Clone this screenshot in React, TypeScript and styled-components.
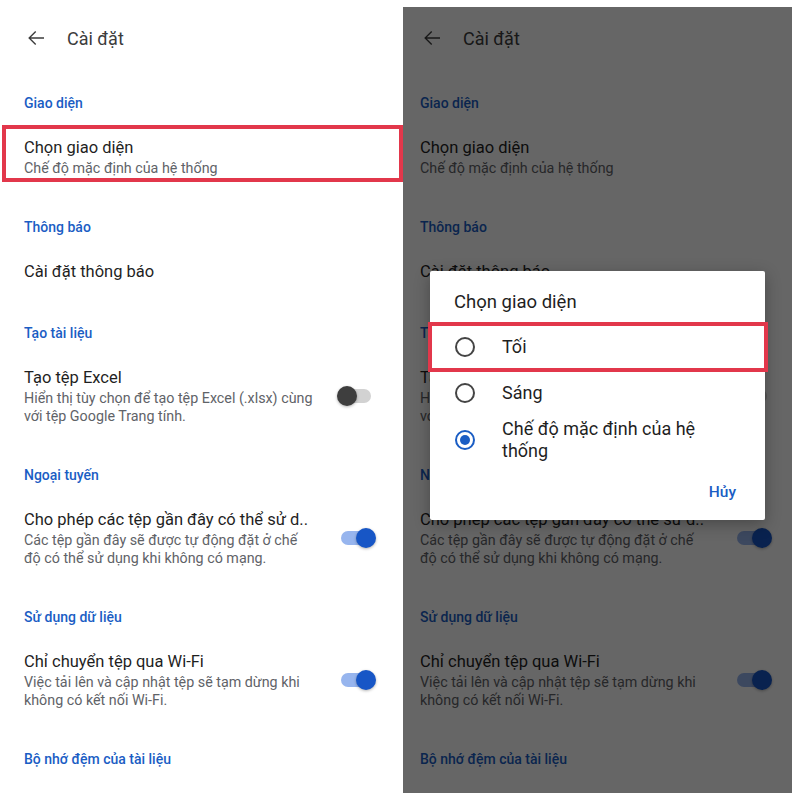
import React from 'react';
import styled, { createGlobalStyle, css } from 'styled-components';

interface SettingItem {
  title: string;
  lines?: string[];
  toggle?: 'on' | 'off';
  highlight?: boolean;
}

interface SettingSection {
  heading: string;
  items: SettingItem[];
}

const sections: SettingSection[] = [
  {
    heading: 'Giao diện',
    items: [{ title: 'Chọn giao diện', lines: ['Chế độ mặc định của hệ thống'], highlight: true }],
  },
  { heading: 'Thông báo', items: [{ title: 'Cài đặt thông báo' }] },
  {
    heading: 'Tạo tài liệu',
    items: [
      {
        title: 'Tạo tệp Excel',
        lines: ['Hiển thị tùy chọn để tạo tệp Excel (.xlsx) cùng', 'với tệp Google Trang tính.'],
        toggle: 'off',
      },
    ],
  },
  {
    heading: 'Ngoại tuyến',
    items: [
      {
        title: 'Cho phép các tệp gần đây có thể sử d..',
        lines: ['Các tệp gần đây sẽ được tự động đặt ở chế', 'độ có thể sử dụng khi không có mạng.'],
        toggle: 'on',
      },
    ],
  },
  {
    heading: 'Sử dụng dữ liệu',
    items: [
      {
        title: 'Chỉ chuyển tệp qua Wi-Fi',
        lines: ['Việc tải lên và cập nhật tệp sẽ tạm dừng khi', 'không có kết nối Wi-Fi.'],
        toggle: 'on',
      },
    ],
  },
  { heading: 'Bộ nhớ đệm của tài liệu', items: [] },
];

const themeOptions = [
  { label: ['Tối'], selected: false, highlight: true },
  { label: ['Sáng'], selected: false },
  { label: ['Chế độ mặc định của hệ', 'thống'], selected: true },
];

const RED = '#e2374b';
const BLUE = '#1a5dc4';

const GlobalStyle = createGlobalStyle`
  html, body {
    margin: 0;
    padding: 0;
    background: #fff;
  }
  body {
    font-family: Roboto, "Noto Sans", "Liberation Sans", sans-serif;
    -webkit-font-smoothing: antialiased;
  }
`;

const Page = styled.div`
  width: 800px;
  height: 800px;
  box-sizing: border-box;
  padding: 7px;
  display: flex;
  gap: 7px;
  background: #fff;
`;

const Phone = styled.div`
  position: relative;
  width: 389px;
  height: 786px;
  background: #fff;
`;

const Header = styled.div`
  height: 58px;
  padding-top: 4px;
  box-sizing: border-box;
  display: flex;
  align-items: center;
  padding-left: 17px;
  gap: 19px;
`;

const HeaderTitle = styled.div`
  font-size: 18px;
  color: #3c3c3c;
`;

const SectionHeading = styled.div`
  margin: 28px 0 12px;
  padding: 0 17px;
  font-size: 14px;
  font-weight: 500;
  line-height: 20px;
  color: ${BLUE};
`;

const Item = styled.div`
  position: relative;
  display: flex;
  align-items: center;
  padding: 12px 20px 12px 17px;
`;

const Highlight = styled.div`
  position: absolute;
  top: 0;
  left: -5px;
  right: -7px;
  height: 57px;
  box-sizing: border-box;
  border: 4px solid ${RED};
  pointer-events: none;
`;

const ItemText = styled.div`
  flex: 1;
  min-width: 0;
`;

const ItemTitle = styled.div`
  font-size: 16.5px;
  line-height: 22px;
  color: #1f1f1f;
  white-space: nowrap;
`;

const ItemLine = styled.div`
  font-size: 14.3px;
  line-height: 18px;
  color: #5f6368;
  white-space: nowrap;
`;

const Toggle = styled.div<{ $on: boolean }>`
  position: relative;
  width: 40px;
  height: 22px;
  flex: none;

  &::before {
    content: '';
    position: absolute;
    left: 5px;
    top: 4px;
    width: 30px;
    height: 14px;
    border-radius: 7px;
    background: ${(p) => (p.$on ? '#97b5ee' : '#d2d2d2')};
  }

  &::after {
    content: '';
    position: absolute;
    top: 1px;
    left: ${(p) => (p.$on ? '20px' : '1px')};
    width: 20px;
    height: 20px;
    border-radius: 50%;
    background: ${(p) => (p.$on ? '#1756c6' : '#3e3e3e')};
    box-shadow: 0 1px 3px rgba(0, 0, 0, 0.3);
  }
`;

const Scrim = styled.div`
  position: absolute;
  inset: 0;
  background: rgba(0, 0, 0, 0.6);
  display: flex;
  justify-content: center;
  align-items: center;
  padding-bottom: 9px;
  box-sizing: border-box;
`;

const Dialog = styled.div`
  width: 335px;
  box-sizing: border-box;
  background: #fff;
  border-radius: 2px;
  padding: 19px 0 18px;
  box-shadow: 0 4px 16px rgba(0, 0, 0, 0.3);
`;

const DialogTitle = styled.div`
  padding: 0 24px;
  font-size: 18.5px;
  line-height: 24px;
  color: #1f1f1f;
  margin-bottom: 10px;
`;

const OptionRow = styled.div<{ $tall?: boolean }>`
  position: relative;
  display: flex;
  align-items: center;
  gap: 27px;
  min-height: ${(p) => (p.$tall ? '48px' : '46px')};
  padding: 0 24px 0 25px;
  box-sizing: border-box;
`;

const OptionHighlight = styled.div`
  position: absolute;
  top: -2px;
  bottom: -2px;
  left: -2px;
  right: -3px;
  border: 4px solid ${RED};
  pointer-events: none;
`;

const Radio = styled.div<{ $checked: boolean }>`
  width: 20px;
  height: 20px;
  flex: none;
  box-sizing: border-box;
  border-radius: 50%;
  border: 2px solid ${(p) => (p.$checked ? BLUE : '#444')};
  display: flex;
  align-items: center;
  justify-content: center;

  ${(p) =>
    p.$checked &&
    css`
      &::after {
        content: '';
        width: 10px;
        height: 10px;
        border-radius: 50%;
        background: ${BLUE};
      }
    `}
`;

const OptionLabel = styled.div`
  font-size: 18px;
  line-height: 22px;
  color: #1f1f1f;
`;

const DialogActions = styled.div`
  display: flex;
  justify-content: flex-end;
  padding: 18px 29px 0 0;
`;

const CancelButton = styled.div`
  font-size: 15.5px;
  font-weight: 500;
  line-height: 20px;
  color: ${BLUE};
`;

const BackArrow = () => (
  <svg width="24" height="24" viewBox="0 0 24 24" fill="#3c3c3c">
    <path d="M20 11.25H6.9l5.3-5.3L11.2 5 4.2 12l7 7 1-0.95-5.3-5.3H20z" />
  </svg>
);

const SettingsScreen: React.FC<{ showHighlight?: boolean }> = ({ showHighlight }) => (
  <>
    <Header>
      <BackArrow />
      <HeaderTitle>Cài đặt</HeaderTitle>
    </Header>
    {sections.map((section) => (
      <div key={section.heading}>
        <SectionHeading>{section.heading}</SectionHeading>
        {section.items.map((item) => (
          <Item key={item.title}>
            {showHighlight && item.highlight && <Highlight />}
            <ItemText>
              <ItemTitle>{item.title}</ItemTitle>
              {item.lines?.map((line) => (
                <ItemLine key={line}>{line}</ItemLine>
              ))}
            </ItemText>
            {item.toggle && <Toggle $on={item.toggle === 'on'} />}
          </Item>
        ))}
      </div>
    ))}
  </>
);

const ThemeDialog = () => (
  <Dialog>
    <DialogTitle>Chọn giao diện</DialogTitle>
    {themeOptions.map((opt) => (
      <OptionRow key={opt.label.join(' ')} $tall={opt.label.length > 1}>
        {opt.highlight && <OptionHighlight />}
        <Radio $checked={opt.selected} />
        <OptionLabel>
          {opt.label.map((l) => (
            <div key={l}>{l}</div>
          ))}
        </OptionLabel>
      </OptionRow>
    ))}
    <DialogActions>
      <CancelButton>Hủy</CancelButton>
    </DialogActions>
  </Dialog>
);

export default function App() {
  return (
    <>
      <GlobalStyle />
      <Page>
        <Phone>
          <SettingsScreen showHighlight />
        </Phone>
        <Phone>
          <SettingsScreen />
          <Scrim>
            <ThemeDialog />
          </Scrim>
        </Phone>
      </Page>
    </>
  );
}
